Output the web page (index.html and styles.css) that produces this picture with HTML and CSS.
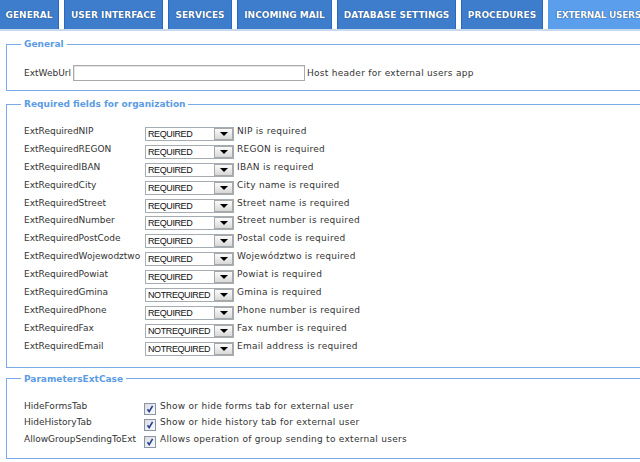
FILE: index.html
```html
<!DOCTYPE html>
<html lang="en">
<head>
<meta charset="utf-8">
<title>Settings - External users</title>
<link rel="stylesheet" href="styles.css">
</head>
<body>
<nav class="tabs">
  <a class="tab">GENERAL</a>
  <a class="tab">USER INTERFACE</a>
  <a class="tab">SERVICES</a>
  <a class="tab">INCOMING MAIL</a>
  <a class="tab">DATABASE SETTINGS</a>
  <a class="tab">PROCEDURES</a>
  <a class="tab active">EXTERNAL USERS</a>
</nav>
<div class="tab-rule"></div>

<main class="panel">
  <fieldset class="group group-general">
    <legend>General</legend>
    <div class="url-row">
      <span class="url-label">ExtWebUrl</span>
      <span class="textbox"></span>
      <span class="desc">Host header for external users app</span>
    </div>
  </fieldset>

  <fieldset class="group group-required">
    <legend>Required fields for organization</legend>
    <div class="req-row"><span class="label">ExtRequiredNIP</span><span class="combo"><span class="combo-text">REQUIRED</span><span class="combo-btn"></span></span><span class="desc">NIP is required</span></div>
    <div class="req-row"><span class="label">ExtRequiredREGON</span><span class="combo"><span class="combo-text">REQUIRED</span><span class="combo-btn"></span></span><span class="desc">REGON is required</span></div>
    <div class="req-row"><span class="label">ExtRequiredIBAN</span><span class="combo"><span class="combo-text">REQUIRED</span><span class="combo-btn"></span></span><span class="desc">IBAN is required</span></div>
    <div class="req-row"><span class="label">ExtRequiredCity</span><span class="combo"><span class="combo-text">REQUIRED</span><span class="combo-btn"></span></span><span class="desc">City name is required</span></div>
    <div class="req-row"><span class="label">ExtRequiredStreet</span><span class="combo"><span class="combo-text">REQUIRED</span><span class="combo-btn"></span></span><span class="desc">Street name is required</span></div>
    <div class="req-row"><span class="label">ExtRequiredNumber</span><span class="combo"><span class="combo-text">REQUIRED</span><span class="combo-btn"></span></span><span class="desc">Street number is required</span></div>
    <div class="req-row"><span class="label">ExtRequiredPostCode</span><span class="combo"><span class="combo-text">REQUIRED</span><span class="combo-btn"></span></span><span class="desc">Postal code is required</span></div>
    <div class="req-row"><span class="label">ExtRequiredWojewodztwo</span><span class="combo"><span class="combo-text">REQUIRED</span><span class="combo-btn"></span></span><span class="desc">Województwo is required</span></div>
    <div class="req-row"><span class="label">ExtRequiredPowiat</span><span class="combo"><span class="combo-text">REQUIRED</span><span class="combo-btn"></span></span><span class="desc">Powiat is required</span></div>
    <div class="req-row"><span class="label">ExtRequiredGmina</span><span class="combo"><span class="combo-text">NOTREQUIRED</span><span class="combo-btn"></span></span><span class="desc">Gmina is required</span></div>
    <div class="req-row"><span class="label">ExtRequiredPhone</span><span class="combo"><span class="combo-text">REQUIRED</span><span class="combo-btn"></span></span><span class="desc">Phone number is required</span></div>
    <div class="req-row"><span class="label">ExtRequiredFax</span><span class="combo"><span class="combo-text">NOTREQUIRED</span><span class="combo-btn"></span></span><span class="desc">Fax number is required</span></div>
    <div class="req-row"><span class="label">ExtRequiredEmail</span><span class="combo"><span class="combo-text">NOTREQUIRED</span><span class="combo-btn"></span></span><span class="desc">Email address is required</span></div>
  </fieldset>

  <fieldset class="group group-params">
    <legend>ParametersExtCase</legend>
    <div class="chk-row"><span class="label">HideFormsTab</span><span class="check"><svg viewBox="0 0 12 12" width="12" height="12"><path d="M3.5 6.2 L5.2 8.6 L8.6 2.8" fill="none" stroke="#1f3f99" stroke-width="1.6"/></svg></span><span class="desc">Show or hide forms tab for external user</span></div>
    <div class="chk-row"><span class="label">HideHistoryTab</span><span class="check"><svg viewBox="0 0 12 12" width="12" height="12"><path d="M3.5 6.2 L5.2 8.6 L8.6 2.8" fill="none" stroke="#1f3f99" stroke-width="1.6"/></svg></span><span class="desc">Show or hide history tab for external user</span></div>
    <div class="chk-row"><span class="label">AllowGroupSendingToExt</span><span class="check"><svg viewBox="0 0 12 12" width="12" height="12"><path d="M3.5 6.2 L5.2 8.6 L8.6 2.8" fill="none" stroke="#1f3f99" stroke-width="1.6"/></svg></span><span class="desc">Allows operation of group sending to external users</span></div>
  </fieldset>
</main>
</body>
</html>
```

FILE: styles.css
```css
html, body {
  margin: 0;
  padding: 0;
  background: #fff;
  overflow: hidden;
}

body {
  font-family: "DejaVu Sans", Verdana, sans-serif;
  font-size: 9px;
  color: #333;
  width: 640px;
}

/* Top tab strip */
.tabs {
  display: flex;
  gap: 5px;
  height: 29px;
  width: 700px;
}

.tab {
  box-sizing: border-box;
  height: 29px;
  display: flex;
  align-items: center;
  justify-content: center;
  background: #3d7dcc;
  border-left: 1px solid #2a69bd;
  border-right: 1px solid #2a69bd;
  color: #fff;
  font-weight: bold;
  font-size: 9px;
  white-space: nowrap;
  text-shadow: 0 0 1px #1a4a8a, 0 0 1px #1a4a8a;
}

.tab:nth-child(1) { width: 59px; border-left: 0; }
.tab:nth-child(2) { width: 99px; }
.tab:nth-child(3) { width: 64px; }
.tab:nth-child(4) { width: 95px; }
.tab:nth-child(5) { width: 119px; }
.tab:nth-child(6) { width: 82px; }
.tab:nth-child(7) {
  width: 100px;
  justify-content: flex-start;
  padding-left: 7px;
  letter-spacing: -0.3px;
}

.tab.active {
  background: #5b9fec;
  border-color: #5b9fec;
}

.tab-rule {
  height: 2px;
  background: #c9d9ee;
}

/* Setting groups */
.panel {
  padding-left: 6px;
  width: 700px;
}

.group {
  margin: 0;
  border: 1px solid #79a9e6;
  border-right: 0;
  padding: 15px 0 9px 17px;
  min-width: 0;
}

.group-general { margin-top: 7px; }
.group-required { margin-top: 7px; padding-top: 15px; padding-bottom: 9px; }
.group-params { margin-top: 5px; padding-top: 14px; padding-bottom: 10px; }

.group legend {
  padding: 0 3px;
  margin-left: -3px;
  color: #5c9be4;
  font-weight: bold;
  font-size: 9px;
  line-height: 12px;
}

.desc {
  white-space: nowrap;
  line-height: 12px;
  letter-spacing: 0.28px;
}

/* URL row */
.url-row {
  display: flex;
  align-items: center;
  height: 16px;
}

.url-label {
  width: 49px;
}

.textbox {
  box-sizing: border-box;
  width: 232px;
  height: 16px;
  border: 1px solid #a9a9a9;
  box-shadow: inset 1px 1px 0 #e4e4e4;
  background: #fff;
  margin-right: 2px;
}

/* Required-field rows */
.req-row {
  display: flex;
  align-items: flex-start;
  height: 17.9px;
}

.req-row .label {
  width: 121px;
  line-height: 12px;
}

.combo {
  box-sizing: border-box;
  display: flex;
  width: 89px;
  height: 14px;
  margin-top: 2px;
  border: 1px solid #a5acb2;
  background: #fff;
  margin-right: 3px;
}

.combo-text {
  flex: 1;
  font-family: "Liberation Sans", Arial, sans-serif;
  font-size: 9px;
  line-height: 13px;
  padding-left: 2px;
  color: #111;
  letter-spacing: -0.4px;
  overflow: hidden;
  white-space: nowrap;
}

.combo-btn {
  box-sizing: border-box;
  position: relative;
  width: 19px;
  height: 12px;
  border: 1px solid #a8a8a8;
  background: linear-gradient(#fbfbfb, #d8d8d8);
}

.combo-btn::after {
  content: "";
  position: absolute;
  left: 4.5px;
  top: 3px;
  border-left: 4px solid transparent;
  border-right: 4px solid transparent;
  border-top: 4px solid #000;
}

/* Checkbox rows */
.chk-row {
  display: flex;
  align-items: flex-start;
  height: 16.5px;
}

.chk-row .label {
  width: 120px;
  line-height: 12px;
  padding-top: 1px;
  white-space: nowrap;
}

.check {
  box-sizing: border-box;
  display: flex;
  width: 12px;
  height: 12px;
  margin-top: 4px;
  margin-right: 4px;
  border: 1px solid #8894a8;
  background: linear-gradient(135deg, #dcdcdc, #fafafa);
}

.check svg {
  margin: -1px;
}

.chk-row .desc {
  padding-top: 1px;
}
```
